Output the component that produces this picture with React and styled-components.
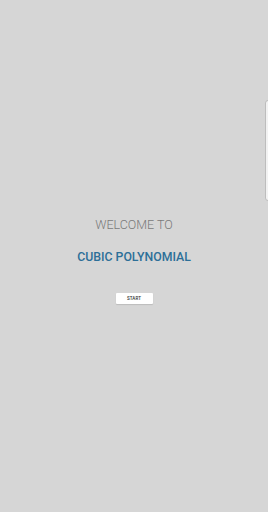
import React from 'react';
import styled, { createGlobalStyle } from 'styled-components';

const GlobalStyle = createGlobalStyle`
  html, body {
    margin: 0;
    padding: 0;
    background: #d6d6d6;
  }
  body {
    font-family: Roboto, "Liberation Sans", sans-serif;
  }
`;

const Screen = styled.div`
  position: relative;
  width: 268px;
  height: 512px;
  background: #d6d6d6;
  display: flex;
  flex-direction: column;
  align-items: center;
  padding-top: 217px;
  box-sizing: border-box;
  overflow: hidden;
`;

const Welcome = styled.div`
  font-weight: 300;
  font-size: 12.5px;
  color: #7a7a7a;
  letter-spacing: 0;
  line-height: 15px;
`;

const Title = styled.h1`
  margin: 18px 0 0;
  font-weight: 500;
  font-size: 12.3px;
  color: #2c6f98;
  letter-spacing: 0;
  line-height: 15px;
`;

const StartButton = styled.button`
  margin-top: 28px;
  width: 37px;
  height: 11px;
  padding: 0;
  border: none;
  border-radius: 1px;
  background: #ffffff;
  box-shadow: 0 1px 1px rgba(0, 0, 0, 0.12);
  font-family: Roboto, "Liberation Sans", sans-serif;
  font-weight: 500;
  font-size: 4.5px;
  color: #333333;
  letter-spacing: 0.1px;
  cursor: pointer;
`;

const SideHandle = styled.div`
  position: absolute;
  right: -6px;
  top: 100px;
  width: 9px;
  height: 101px;
  background: #f2f2f2;
  border: 1px solid #bdbdbd;
  border-radius: 3px;
  box-sizing: border-box;
`;

export default function App() {
  return (
    <>
      <GlobalStyle />
      <Screen>
        <Welcome>WELCOME TO</Welcome>
        <Title>CUBIC POLYNOMIAL</Title>
        <StartButton>START</StartButton>
        <SideHandle />
      </Screen>
    </>
  );
}
